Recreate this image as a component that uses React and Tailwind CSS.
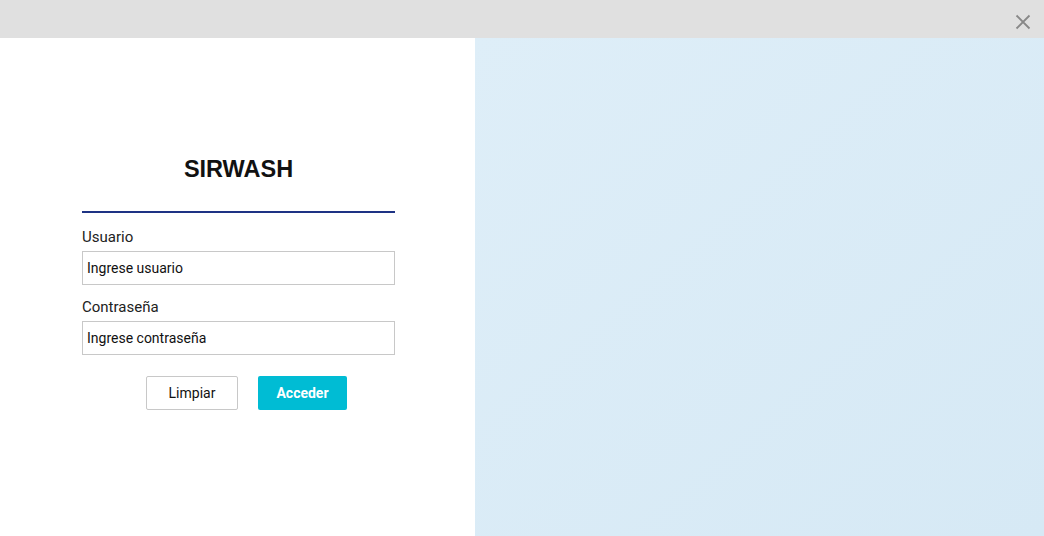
import React from "react";

const App = () => {
  return (
    <div className="w-[1044px] h-[536px] flex flex-col overflow-hidden bg-white" style={{ fontFamily: "Roboto, 'Liberation Sans', sans-serif" }}>
      <div className="h-[38px] bg-[#e0e0e0] flex items-center justify-end pr-[13px] shrink-0">
        <svg width="16" height="16" viewBox="0 0 16 16" className="mt-[6px]">
          <path d="M1.5 1.5 L14.5 14.5 M14.5 1.5 L1.5 14.5" stroke="#888" strokeWidth="1.8" />
        </svg>
      </div>
      <div className="flex flex-1">
        <div className="w-[475px] flex flex-col pt-[117px] pl-[82px]">
          <div className="w-[313px] flex flex-col">
            <h1 className="text-center text-[23.5px] font-bold text-[#111] leading-[28px]" style={{ fontFamily: "'Liberation Sans', Arial, sans-serif" }}>
              SIRWASH
            </h1>
            <div className="h-[2px] bg-[#1e3384] mt-[28px]" />
            <label className="text-[15px] text-[#222] mt-[14px] leading-[20px]">Usuario</label>
            <input
              className="mt-[4px] h-[34px] border border-[#c8c8c8] px-[4px] text-[14px] text-black placeholder:text-[#111] outline-none"
              placeholder="Ingrese usuario"
            />
            <label className="text-[15px] text-[#222] mt-[12px] leading-[20px]">Contraseña</label>
            <input
              className="mt-[4px] h-[34px] border border-[#c8c8c8] px-[4px] text-[14px] text-black placeholder:text-[#111] outline-none"
              placeholder="Ingrese contraseña"
            />
            <div className="flex gap-[20px] mt-[21px] pl-[64px]">
              <button className="w-[92px] h-[34px] border border-[#c8c8c8] rounded-[2px] bg-white text-[14px] text-[#111]">
                Limpiar
              </button>
              <button className="w-[89px] h-[34px] rounded-[2px] bg-[#00bcd4] text-[14px] font-bold text-white">
                Acceder
              </button>
            </div>
          </div>
        </div>
        <div className="flex-1 bg-gradient-to-br from-[#deeef8] to-[#d6e9f5]" />
      </div>
    </div>
  );
};

export default App;
